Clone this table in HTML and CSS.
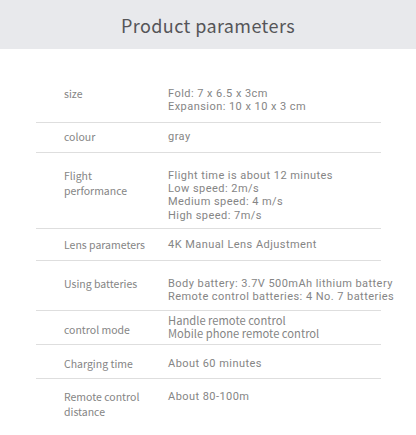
FILE: index.html
```html
<!DOCTYPE html>
<html>
<head>
<meta charset="utf-8">
<link rel="stylesheet" href="styles.css">
</head>
<body>
<header class="header"><h1 class="title">Product parameters</h1></header>
<div class="table">
  <div class="row r-size">
    <div class="label">size</div>
    <div class="value"><div>Fold: 7 x 6.5 x 3cm</div><div>Expansion: 10 x 10 x 3 cm</div></div>
  </div>
  <div class="row r-colour">
    <div class="label">colour</div>
    <div class="value"><div>gray</div></div>
  </div>
  <div class="row r-flight">
    <div class="label">Flight<br>performance</div>
    <div class="value"><div>Flight time is about 12 minutes</div><div>Low speed: 2m/s</div><div>Medium speed: 4 m/s</div><div>High speed: 7m/s</div></div>
  </div>
  <div class="row r-lens">
    <div class="label">Lens parameters</div>
    <div class="value"><div>4K Manual Lens Adjustment</div></div>
  </div>
  <div class="row r-batt">
    <div class="label">Using batteries</div>
    <div class="value"><div>Body battery: 3.7V 500mAh lithium battery</div><div>Remote control batteries: 4 No. 7 batteries</div></div>
  </div>
  <div class="row r-mode">
    <div class="label label-mid">control mode</div>
    <div class="value value-plain"><div>Handle remote control</div><div>Mobile phone remote control</div></div>
  </div>
  <div class="row r-charge">
    <div class="label">Charging time</div>
    <div class="value"><div>About 60 minutes</div></div>
  </div>
  <div class="row r-dist">
    <div class="label">Remote control<br>distance</div>
    <div class="value"><div>About 80-100m</div></div>
  </div>
</div>
</body>
</html>
```
FILE: styles.css
```css
html, body { margin: 0; padding: 0; background: #ffffff; }
body { width: 416px; height: 435px; overflow: hidden; }
.header {
  height: 49px;
  background: #e8e9ec;
  display: flex;
  align-items: center;
  justify-content: center;
}
.title {
  margin: 0;
  font-family: "Noto Sans CJK SC", "Noto Sans", sans-serif;
  font-weight: 400;
  font-size: 18px;
  line-height: 24px;
  letter-spacing: 0.4px;
  color: #555558;
  padding-top: 1px;
}
.table {
  margin: 0 35px 0 36px;
}
.row {
  display: flex;
  align-items: flex-start;
  border-bottom: 1px solid #dedede;
  padding-left: 28px;
  box-sizing: border-box;
}
.label {
  width: 104px;
  flex: none;
  font-family: "Noto Sans CJK SC", "Noto Sans", sans-serif;
  font-size: 10.5px;
  line-height: 15px;
  color: #858585;
}
.value {
  font-family: Roboto, "Noto Sans", sans-serif;
  font-size: 11px;
  letter-spacing: 0.45px;
  line-height: 13.2px;
  padding-top: 1px;
  color: #858585;
  white-space: nowrap;
}
.value-plain {
  font-family: "Noto Sans CJK SC", "Noto Sans", sans-serif;
  font-size: 11.2px;
  letter-spacing: 0;
  line-height: 13.4px;
  padding-top: 0;
}
.label-mid { align-self: center; }
.r-size { height: 74px; padding-top: 37px; }
.r-colour { height: 30px; padding-top: 6px; }
.r-flight { height: 76px; padding-top: 15px; }
.r-lens { height: 32px; padding-top: 8px; }
.r-batt { height: 50px; padding-top: 15px; }
.r-mode { height: 34px; padding-top: 3px; }
.r-charge { height: 34px; padding-top: 11px; }
.r-dist { border-bottom: none; padding-top: 10px; }
```
